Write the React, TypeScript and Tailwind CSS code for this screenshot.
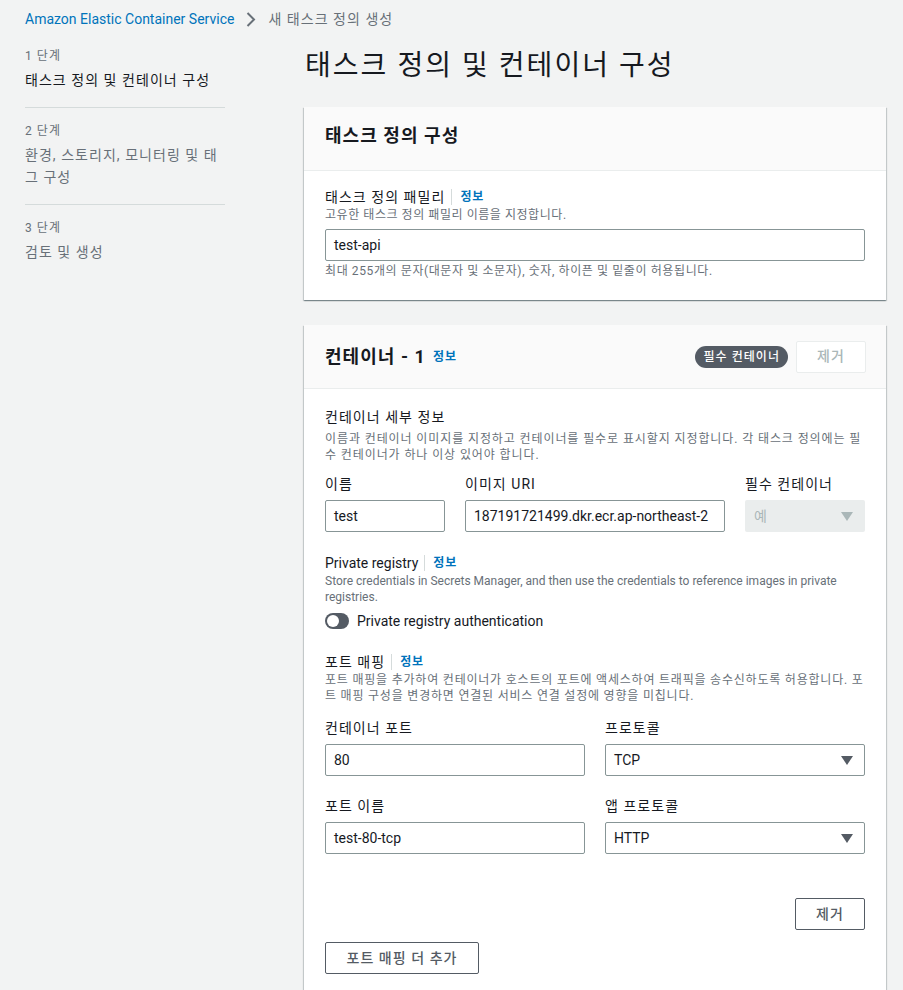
import React from 'react';

const steps = [
  { step: '1 단계', title: '태스크 정의 및 컨테이너 구성', active: true },
  { step: '2 단계', title: '환경, 스토리지, 모니터링 및 태그 구성', active: false },
  { step: '3 단계', title: '검토 및 생성', active: false },
];

function Info() {
  return (
    <span className="ml-[6px] border-l border-[#d5dbdb] pl-[8px] text-[12px] font-bold leading-4 tracking-[0.065em] text-[#0073bb]">
      정보
    </span>
  );
}

function Label({ children, info, latin }: { children: React.ReactNode; info?: boolean; latin?: boolean }) {
  return (
    <div className="flex items-center text-[14px] leading-[20px] text-[#16191f]">
      <span className={latin ? 'tracking-normal' : ''}>{children}</span>
      {info && <Info />}
    </div>
  );
}

function Desc({
  children,
  className = '',
  track = 'tracking-[0.046em]',
}: {
  children: React.ReactNode;
  className?: string;
  track?: string;
}) {
  return <p className={`text-[12px] leading-4 text-[#687078] ${track} ${className}`}>{children}</p>;
}

function Input({ value }: { value: string }) {
  return (
    <div className="flex h-8 items-center overflow-hidden whitespace-nowrap rounded-[2px] border border-[#879596] bg-white pl-2 text-[14px] tracking-normal text-[#16191f]">
      {value}
    </div>
  );
}

function Caret({ color }: { color: string }) {
  return (
    <svg width="12" height="9" viewBox="0 0 12 9">
      <polygon points="0,0 12,0 6,9" fill={color} />
    </svg>
  );
}

function Select({ value, disabled }: { value: string; disabled?: boolean }) {
  return (
    <div
      className={
        disabled
          ? 'flex h-8 items-center justify-between rounded-[2px] bg-[#eaeded] pl-[9px] pr-[12px] text-[14px] text-[#aab7b8]'
          : 'flex h-8 items-center justify-between rounded-[2px] border border-[#879596] bg-white pl-2 pr-[11px] text-[14px] tracking-normal text-[#16191f]'
      }
    >
      <span>{value}</span>
      <Caret color={disabled ? '#aab7b8' : '#545b64'} />
    </div>
  );
}

function Card({ children }: { children: React.ReactNode }) {
  return (
    <div className="bg-white shadow-[0_1px_1px_0_rgba(0,28,36,0.3),1px_1px_1px_0_rgba(0,28,36,0.15),-1px_1px_1px_0_rgba(0,28,36,0.15)]">
      {children}
    </div>
  );
}

export default function App() {
  return (
    <div className="min-h-[990px] bg-[#f2f3f3] pl-[25px] pr-[17px] font-['Roboto','Noto_Sans_CJK_KR',sans-serif] tracking-[0.065em] text-[#16191f]">
      {/* Breadcrumb */}
      <div className="flex h-[30px] items-center pt-2 text-[14px] leading-[22px]">
        <span className="tracking-normal text-[#0073bb]">Amazon Elastic Container Service</span>
        <svg className="ml-[12px] mr-[12px]" width="10" height="15" viewBox="0 0 10 15">
          <path d="M1.5 1l6.5 6.5-6.5 6.5" fill="none" stroke="#687078" strokeWidth="2" />
        </svg>
        <span className="text-[#687078]">새 태스크 정의 생성</span>
      </div>

      <div className="mt-[18px] flex">
        {/* Steps nav */}
        <nav className="w-[200px] shrink-0">
          {steps.map((s, i) => (
            <div
              key={s.step}
              className={`${i > 0 ? 'pt-[15px]' : ''} ${i < steps.length - 1 ? 'border-b border-[#d5dbdb] pb-4' : ''}`}
            >
              <div className="text-[12px] leading-4 text-[#687078]">{s.step}</div>
              <div
                className={`mt-[5px] text-[14px] leading-[22px] ${s.active ? 'text-[#16191f]' : 'text-[#687078]'}`}
              >
                {s.title}
              </div>
            </div>
          ))}
        </nav>

        {/* Main */}
        <main className="ml-[79px] flex-1">
          <h1 className="pl-px text-[28px] font-normal leading-9 tracking-[0.073em] text-[#16191f]">
            태스크 정의 및 컨테이너 구성
          </h1>

          <div className="mt-[23px]">
            <Card>
              <div className="flex h-16 items-center border-b border-[#eaeded] bg-[#fafafa] px-[21px] pb-[6px]">
                <h2 className="text-[18px] font-bold">태스크 정의 구성</h2>
              </div>
              <div className="px-[21px] pb-[21px] pt-4">
                <Label info>태스크 정의 패밀리</Label>
                <Desc>고유한 태스크 정의 패밀리 이름을 지정합니다.</Desc>
                <div className="mt-[6px]">
                  <Input value="test-api" />
                </div>
                <Desc className="mt-[2px]" track="tracking-[0.05em]">
                  최대 255개의 문자(대문자 및 소문자), 숫자, 하이픈 및 밑줄이 허용됩니다.
                </Desc>
              </div>
            </Card>
          </div>

          <div className="mt-[25px]">
            <Card>
              <div className="flex h-16 items-center justify-between border-b border-[#eaeded] bg-[#fafafa] px-[20px]">
                <div className="flex items-center pl-px">
                  <h2 className="text-[18px] font-bold">컨테이너 - 1</h2>
                  <span className="ml-[7px] text-[12px] font-bold text-[#0073bb]">정보</span>
                </div>
                <div className="flex items-center gap-2">
                  <span className="flex h-[22px] items-center rounded-full bg-[#545b64] px-[8px] text-[12px] font-medium text-white">
                    필수 컨테이너
                  </span>
                  <button className="h-8 w-[70px] rounded-[2px] border border-[#eaeded] bg-white text-[14px] font-medium text-[#aab7b8]">
                    제거
                  </button>
                </div>
              </div>

              <div className="px-[21px] pb-5 pt-[18px]">
                <Label>컨테이너 세부 정보</Label>
                <Desc className="mt-1" track="tracking-[0.075em]">
                  이름과 컨테이너 이미지를 지정하고 컨테이너를 필수로 표시할지 지정합니다. 각 태스크 정의에는 필수 컨테이너가 하나 이상 있어야 합니다.
                </Desc>

                <div className="mt-[11px] grid grid-cols-[120px_1fr_120px] gap-x-5">
                  <div>
                    <Label>이름</Label>
                    <div className="mt-[6px]">
                      <Input value="test" />
                    </div>
                  </div>
                  <div>
                    <Label>이미지 URI</Label>
                    <div className="mt-[6px]">
                      <Input value="187191721499.dkr.ecr.ap-northeast-2" />
                    </div>
                  </div>
                  <div>
                    <Label>필수 컨테이너</Label>
                    <div className="mt-[6px]">
                      <Select value="예" disabled />
                    </div>
                  </div>
                </div>

                <div className="mt-[21px]">
                  <Label info latin>Private registry</Label>
                  <Desc track="tracking-normal">
                    Store credentials in Secrets Manager, and then use the credentials to reference images in private registries.
                  </Desc>
                  <div className="mt-[5px] flex h-[22px] items-center">
                    <span className="relative h-4 w-6 rounded-full bg-[#545b64]">
                      <span className="absolute left-[2px] top-[2px] h-3 w-3 rounded-full bg-white" />
                    </span>
                    <span className="ml-2 text-[14px] tracking-normal text-[#16191f]">Private registry authentication</span>
                  </div>
                </div>

                <div className="mt-5">
                  <Label info>포트 매핑</Label>
                  <Desc track="tracking-[0.066em]">
                    포트 매핑을 추가하여 컨테이너가 호스트의 포트에 액세스하여 트래픽을 송수신하도록 허용합니다. 포트 매핑 구성을 변경하면 연결된 서비스 연결 설정에 영향을 미칩니다.
                  </Desc>
                  <div className="mt-[14px] grid grid-cols-2 gap-x-5 gap-y-5">
                    <div>
                      <Label>컨테이너 포트</Label>
                      <div className="mt-[6px]">
                        <Input value="80" />
                      </div>
                    </div>
                    <div>
                      <Label>프로토콜</Label>
                      <div className="mt-[6px]">
                        <Select value="TCP" />
                      </div>
                    </div>
                    <div>
                      <Label>포트 이름</Label>
                      <div className="mt-[6px]">
                        <Input value="test-80-tcp" />
                      </div>
                    </div>
                    <div>
                      <Label>앱 프로토콜</Label>
                      <div className="mt-[6px]">
                        <Select value="HTTP" />
                      </div>
                    </div>
                  </div>

                  <div className="mt-[44px] flex justify-end">
                    <button className="h-8 w-[70px] rounded-[2px] border border-[#545b64] bg-white text-[14px] font-medium text-[#545b64]">
                      제거
                    </button>
                  </div>
                  <button className="mt-3 h-8 w-[154px] rounded-[2px] border border-[#545b64] bg-white text-[14px] font-medium text-[#545b64]">
                    포트 매핑 더 추가
                  </button>
                </div>
              </div>
            </Card>
          </div>
        </main>
      </div>
    </div>
  );
}
